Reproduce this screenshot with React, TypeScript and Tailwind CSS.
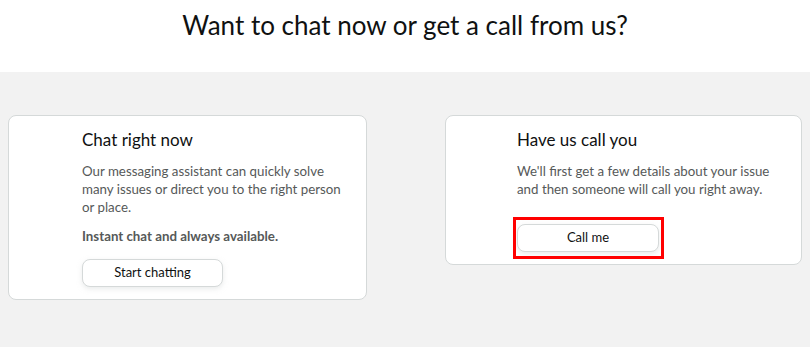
export default function App() {
  return (
    <div className="min-h-[347px] bg-[#f2f2f2] font-['Lato',sans-serif] text-[#0f1111]">
      <div className="h-[72px] bg-white pt-[9px] text-center">
        <h1 className="text-[26px] leading-[32px]">Want to chat now or get a call from us?</h1>
      </div>

      <div className="flex items-start gap-[78px] px-2 pt-[43px]">
        {/* chat card */}
        <div className="w-[360px] rounded-lg border border-[#d5d9d9] bg-white pb-[12px] pl-[73px] pr-4 pt-[12px]">
          <h2 className="text-[17px] leading-6">Chat right now</h2>
          <p className="mt-[10px] text-[13.3px] leading-[18px] text-[#565959]">
            Our messaging assistant can quickly solve many issues or direct you to the right person or place.
          </p>
          <p className="mt-[11px] text-[13.3px] font-bold leading-[18px] text-[#565959]">
            Instant chat and always available.
          </p>
          <button className="mt-[14px] h-[28px] w-[141px] rounded-lg border border-[#d5d9d9] bg-white text-[13px] shadow-[0_2px_5px_rgba(213,217,217,0.5)]">
            Start chatting
          </button>
        </div>

        {/* call card */}
        <div className="w-[358px] rounded-lg border border-[#d5d9d9] bg-white pb-[12px] pl-[71px] pr-4 pt-[12px]">
          <h2 className="text-[17px] leading-6">Have us call you</h2>
          <p className="mt-[10px] text-[13.3px] leading-[18px] text-[#565959]">
            We'll first get a few details about your issue and then someone will call you right away.
          </p>
          <div className="relative mt-[26px] w-[142px]">
            <button className="h-[28px] w-[142px] rounded-lg border border-[#d5d9d9] bg-white text-[13px] shadow-[0_2px_5px_rgba(213,217,217,0.5)]">
              Call me
            </button>
            <span className="pointer-events-none absolute -bottom-[7px] -left-[4px] -right-[5px] -top-[7px] border-[3px] border-[#ff0000]" />
          </div>
        </div>
      </div>
    </div>
  )
}
